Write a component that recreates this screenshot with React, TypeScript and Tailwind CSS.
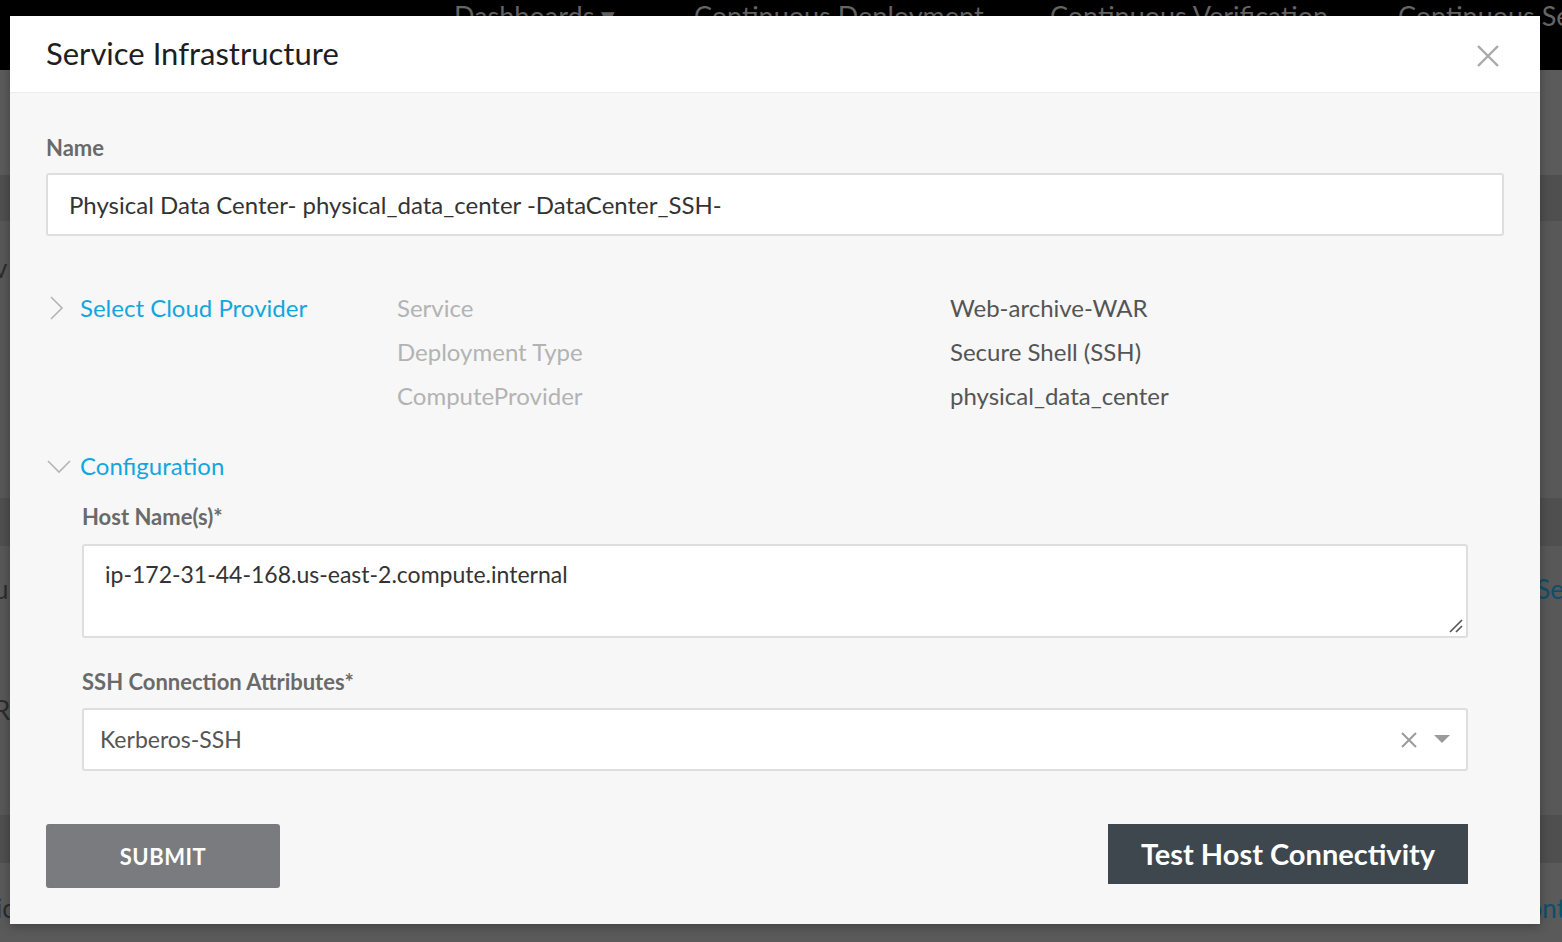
import React from "react";

const font = { fontFamily: "Lato, 'Open Sans', sans-serif" };

function ChevronRight() {
  return (
    <svg width="16" height="24" viewBox="0 0 16 24" className="shrink-0">
      <path d="M2 1 L13 12 L2 23" fill="none" stroke="#b4b4b4" strokeWidth="1.6" />
    </svg>
  );
}

function ChevronDown() {
  return (
    <svg width="24" height="16" viewBox="0 0 24 16" className="shrink-0">
      <path d="M1 2 L12 13 L23 2" fill="none" stroke="#b4b4b4" strokeWidth="1.6" />
    </svg>
  );
}

export default function App() {
  return (
    <div className="relative h-[942px] w-full overflow-hidden bg-[#5a5a5a]" style={font}>
      {/* background page */}
      <div className="flex flex-col">
        <div className="flex h-[70px] items-start overflow-hidden whitespace-nowrap bg-black text-[27px] leading-[32px] text-[#666]">
          <span className="ml-[454px] w-[240px] shrink-0">Dashboards ▾</span>
          <span className="w-[356px] shrink-0">Continuous Deployment</span>
          <span className="w-[348px] shrink-0">Continuous Verification</span>
          <span className="shrink-0">Continuous Services</span>
        </div>
        <div className="h-[105px] bg-[#5b5b5b]" />
        <div className="h-[46px] bg-[#4f4f4f]" />
        <div className="flex h-[277px] items-start justify-between bg-[#585858] pt-[28px] text-[26px] text-[#2c2c2c]">
          <span className="-ml-[6px]">v</span>
        </div>
        <div className="h-[48px] bg-[#4f4f4f]" />
        <div className="flex h-[269px] flex-col bg-[#585858] text-[26px] text-[#2c2c2c]">
          <div className="flex items-center justify-between pt-[24px]">
            <span className="-ml-[6px]">u</span>
            <span className="-mr-[2px] text-[#0f4d6a]">Se</span>
          </div>
          <div className="pt-[82px]">
            <span className="-ml-[6px]">R</span>
          </div>
        </div>
        <div className="h-[48px] bg-[#4f4f4f]" />
        <div className="flex h-[79px] items-start justify-between bg-[#5a5a5a] pt-[26px] text-[26px] text-[#2c2c2c]">
          <span className="-ml-[4px]">ic</span>
          <span className="-mr-[4px] text-[#0f4d6a]">ont</span>
        </div>
      </div>

      {/* modal */}
      <div className="absolute left-[10px] top-[16px] flex h-[908px] w-[1530px] flex-col bg-[#f7f7f7] shadow-[0_2px_10px_rgba(0,0,0,0.3)]">
        <div className="flex h-[77px] shrink-0 items-center justify-between border-b border-[#ececec] bg-white pl-[36px] pr-[40px]">
          <h1 className="pb-[3px] text-[31px] leading-[36px] text-[#1e1e1e]">Service Infrastructure</h1>
          <svg width="24" height="24" viewBox="0 0 24 24" className="mt-[4px]">
            <path d="M2 2 L22 22 M22 2 L2 22" stroke="#a9a9a9" strokeWidth="2.4" />
          </svg>
        </div>

        <div className="flex flex-col px-[36px] pt-[43px]">
          <label className="text-[22px] font-bold leading-[24px] text-[#6a6a6a]">Name</label>
          <input
            readOnly
            value="Physical Data Center- physical_data_center -DataCenter_SSH-"
            className="mt-[13px] h-[63px] w-full rounded-[3px] border-2 border-[#dedede] bg-white px-[21px] text-[24px] text-[#333] outline-none"
            style={font}
          />

          <div className="mt-[50px] flex">
            <div className="flex w-[351px] items-start">
              <div className="ml-[3px] mt-[10px]">
                <ChevronRight />
              </div>
              <span className="ml-[15px] text-[24px] leading-[44px] text-[#12a6e0]">Select Cloud Provider</span>
            </div>
            <div className="flex w-[553px] flex-col text-[24px] leading-[44px] text-[#b3b3b3]">
              <span>Service</span>
              <span>Deployment Type</span>
              <span>ComputeProvider</span>
            </div>
            <div className="flex flex-col text-[24px] leading-[44px] text-[#555]">
              <span>Web-archive-WAR</span>
              <span>Secure Shell (SSH)</span>
              <span>physical_data_center</span>
            </div>
          </div>

          <div className="mt-[26px] flex items-center">
            <div className="ml-[1px] mt-[2px]">
              <ChevronDown />
            </div>
            <span className="ml-[9px] text-[24px] leading-[44px] text-[#12a6e0]">Configuration</span>
          </div>

          <div className="flex flex-col px-[36px]">
            <label className="mt-[17px] text-[22px] font-bold leading-[24px] text-[#6a6a6a]">Host Name(s)*</label>
            <div className="relative mt-[15px]">
              <textarea
                readOnly
                defaultValue="ip-172-31-44-168.us-east-2.compute.internal"
                className="block h-[94px] w-full resize-none rounded-[3px] border-2 border-[#dedede] bg-white px-[21px] pt-[13px] text-[23px] leading-[30px] text-[#333] outline-none"
                style={font}
              />
              <svg width="14" height="14" viewBox="0 0 14 14" className="absolute bottom-[5px] right-[5px]">
                <path d="M1 13 L13 1 M7 13 L13 7" stroke="#555" strokeWidth="1.6" />
              </svg>
            </div>

            <label className="mt-[32px] text-[22px] font-bold leading-[24px] text-[#6a6a6a]">SSH Connection Attributes*</label>
            <div className="mt-[14px] flex h-[63px] items-center rounded-[3px] border-2 border-[#dedede] bg-white pl-[16px] pr-[16px]">
              <span className="flex-1 text-[23px] text-[#555]">Kerberos-SSH</span>
              <svg width="18" height="18" viewBox="0 0 18 18" className="mr-[16px]">
                <path d="M2 2 L16 16 M16 2 L2 16" stroke="#9b9b9b" strokeWidth="2" />
              </svg>
              <svg width="16" height="9" viewBox="0 0 16 9">
                <path d="M0 0 L16 0 L8 8 Z" fill="#9b9b9b" />
              </svg>
            </div>
          </div>

          <div className="mt-[53px] flex items-start justify-between pr-[36px]">
            <button className="h-[64px] w-[234px] rounded-[3px] bg-[#7a7b7f] text-[22px] font-bold tracking-[0.5px] text-white" style={font}>
              SUBMIT
            </button>
            <button className="h-[60px] w-[360px] bg-[#3e474d] text-[29px] font-bold text-white" style={font}>
              Test Host Connectivity
            </button>
          </div>
        </div>
      </div>
    </div>
  );
}
